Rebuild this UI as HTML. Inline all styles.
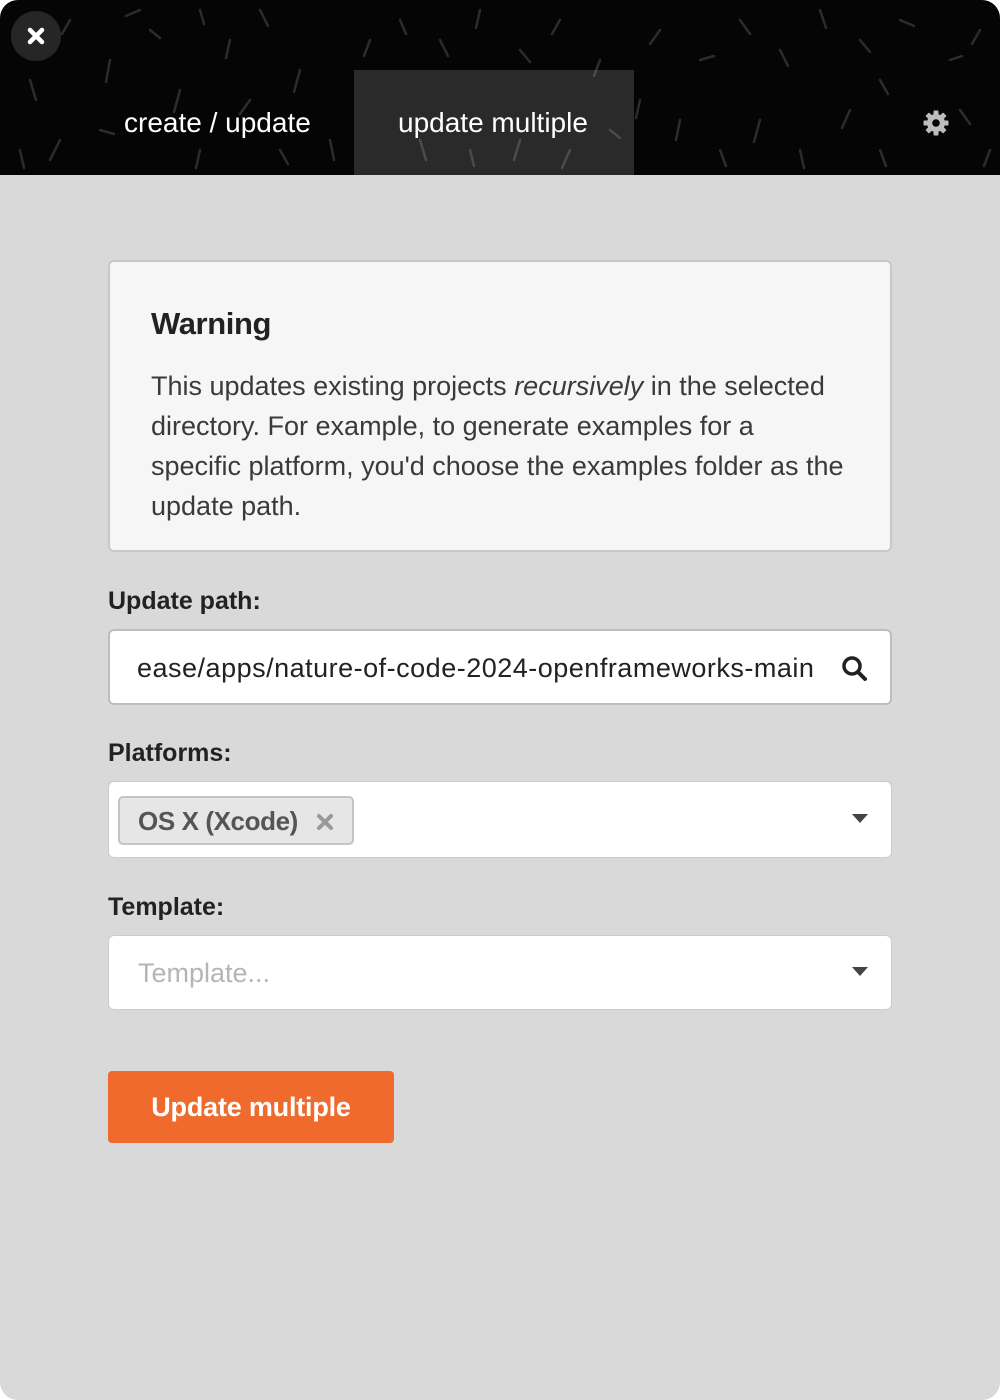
<!DOCTYPE html>
<html><head><meta charset="utf-8"><style>
*{margin:0;padding:0;box-sizing:border-box}
html,body{width:1000px;height:1400px;overflow:hidden;background:#fff}
body{font-family:"Liberation Sans",sans-serif;color:#222}
.win{position:absolute;left:0;top:0;width:1000px;height:1400px;background:#d9d9d9;border-radius:18px;overflow:hidden}
.hdr{position:absolute;left:0;top:0;width:1000px;height:175px;background:#050505}
.close{position:absolute;left:11px;top:11px;width:50px;height:50px;border-radius:25px;background:#262626}
.tab{position:absolute;top:107px;color:#fff;font-size:28px;letter-spacing:0px;white-space:nowrap}
.tabbg{position:absolute;left:354px;top:70px;width:280px;height:105px;background:rgba(255,255,255,0.15)}
.card{position:absolute;left:108px;top:260px;width:784px;height:292px;background:#f6f6f6;border:2px solid #c8c8c8;border-radius:6px}
.card h2{position:absolute;left:41px;top:44px;font-size:31px;font-weight:bold;letter-spacing:-0.4px;color:#222}
.card p{position:absolute;left:41px;top:104px;font-size:27px;line-height:40px;letter-spacing:0px;color:#3a3a3a;white-space:nowrap}
.lbl{position:absolute;left:108px;font-size:25px;font-weight:bold;letter-spacing:0px;color:#222}
.box{position:absolute;left:108px;width:784px;background:#fff;border-radius:6px}
.caret{position:absolute;right:23px;width:0;height:0;border-left:8px solid transparent;border-right:8px solid transparent;border-top:9px solid #444}
.btn{position:absolute;left:108px;top:1071px;width:286px;height:72px;background:#ef6a2c;border-radius:4px;color:#fff;font-weight:bold;font-size:27px;letter-spacing:-0.2px;text-align:center;line-height:72px}
</style></head><body>
<div class="win">
<div class="hdr">
<svg width="1000" height="175" style="position:absolute;left:0;top:0" stroke="#2c2c2c" stroke-width="2.5" stroke-linecap="round" fill="none">
<path d="M30 80l6 20M70 20l-8 14M110 60l-4 22M150 30l10 8M180 90l-6 22M230 40l-4 18M260 10l8 16M300 70l-6 22M330 140l4 20M60 140l-10 20M20 150l4 18M100 130l14 4M200 150l-4 18M280 150l8 14M250 100l-10 14M400 20l6 14M440 40l8 16M480 10l-4 18M520 50l10 12M560 20l-8 14M600 60l-6 16M420 140l6 20M470 150l4 16M520 140l-6 20M570 150l-8 18M610 130l10 8M660 30l-10 14M700 60l14 -4M740 20l10 14M780 50l8 16M820 10l6 18M860 40l10 12M900 20l14 6M950 60l12 -4M980 30l-8 14M680 120l-4 20M720 150l6 16M760 120l-6 22M800 150l4 18M850 110l-8 18M880 150l6 16M960 110l10 14M990 150l-6 16M140 10l-14 6M370 40l-6 16M640 100l-4 18M880 80l8 14M40 40l-10 10M200 10l4 14"/>
</svg>
<div class="close"><svg width="50" height="50"><path d="M19 19L31 31M31 19L19 31" stroke="#fff" stroke-width="4.5" stroke-linecap="round"/></svg></div>
<div class="tabbg"></div>
<div class="tab" style="left:124px">create / update</div>
<div class="tab" style="left:398px">update multiple</div>
<svg style="position:absolute;left:923px;top:110px" width="26" height="26" viewBox="0 0 26 26"><g fill="#bdbdbd"><circle cx="13" cy="13" r="9"/><rect x="10.5" y="0.5" width="5" height="25" rx="1"/><rect x="10.5" y="0.5" width="5" height="25" rx="1" transform="rotate(45 13 13)"/><rect x="10.5" y="0.5" width="5" height="25" rx="1" transform="rotate(90 13 13)"/><rect x="10.5" y="0.5" width="5" height="25" rx="1" transform="rotate(135 13 13)"/></g><circle cx="13" cy="13" r="3.8" fill="#050505"/></svg>
</div>

<div class="card">
<h2>Warning</h2>
<p>This updates existing projects <i>recursively</i> in the selected<br>directory. For example, to generate examples for a<br>specific platform, you'd choose the examples folder as the<br>update path.</p>
</div>

<div class="lbl" style="top:587px">Update path:</div>
<div class="box" style="top:629px;height:76px;border:2px solid #bdbdbd">
<div style="position:absolute;left:27px;top:22px;font-size:27px;letter-spacing:0.5px;color:#222;white-space:nowrap">ease/apps/nature-of-code-2024-openframeworks-main</div>
<svg style="position:absolute;left:731px;top:24px" width="28" height="28" viewBox="0 0 28 28"><circle cx="11" cy="11" r="8" stroke="#222" stroke-width="3.5" fill="none"/><path d="M17 17l7 7" stroke="#222" stroke-width="4" stroke-linecap="round"/></svg>
</div>

<div class="lbl" style="top:739px">Platforms:</div>
<div class="box" style="top:781px;height:77px;border:1px solid #ccc">
<div style="position:absolute;left:9px;top:14px;width:236px;height:49px;background:#e6e6e6;border:2px solid #c4c4c4;border-radius:5px">
<span style="position:absolute;left:18px;top:8px;font-size:26px;font-weight:bold;color:#555;letter-spacing:-0.4px;white-space:nowrap">OS X (Xcode)</span>
<svg style="position:absolute;left:196px;top:15px" width="18" height="18"><path d="M3 3L15 15M15 3L3 15" stroke="#999" stroke-width="4" stroke-linecap="round"/></svg>
</div>
<div class="caret" style="top:32px"></div>
</div>

<div class="lbl" style="top:893px">Template:</div>
<div class="box" style="top:935px;height:75px;border:1px solid #ccc">
<div style="position:absolute;left:29px;top:22px;font-size:27px;color:#b5b5b5;letter-spacing:0px">Template...</div>
<div class="caret" style="top:31px"></div>
</div>

<div class="btn">Update multiple</div>
</div>
</body></html>
